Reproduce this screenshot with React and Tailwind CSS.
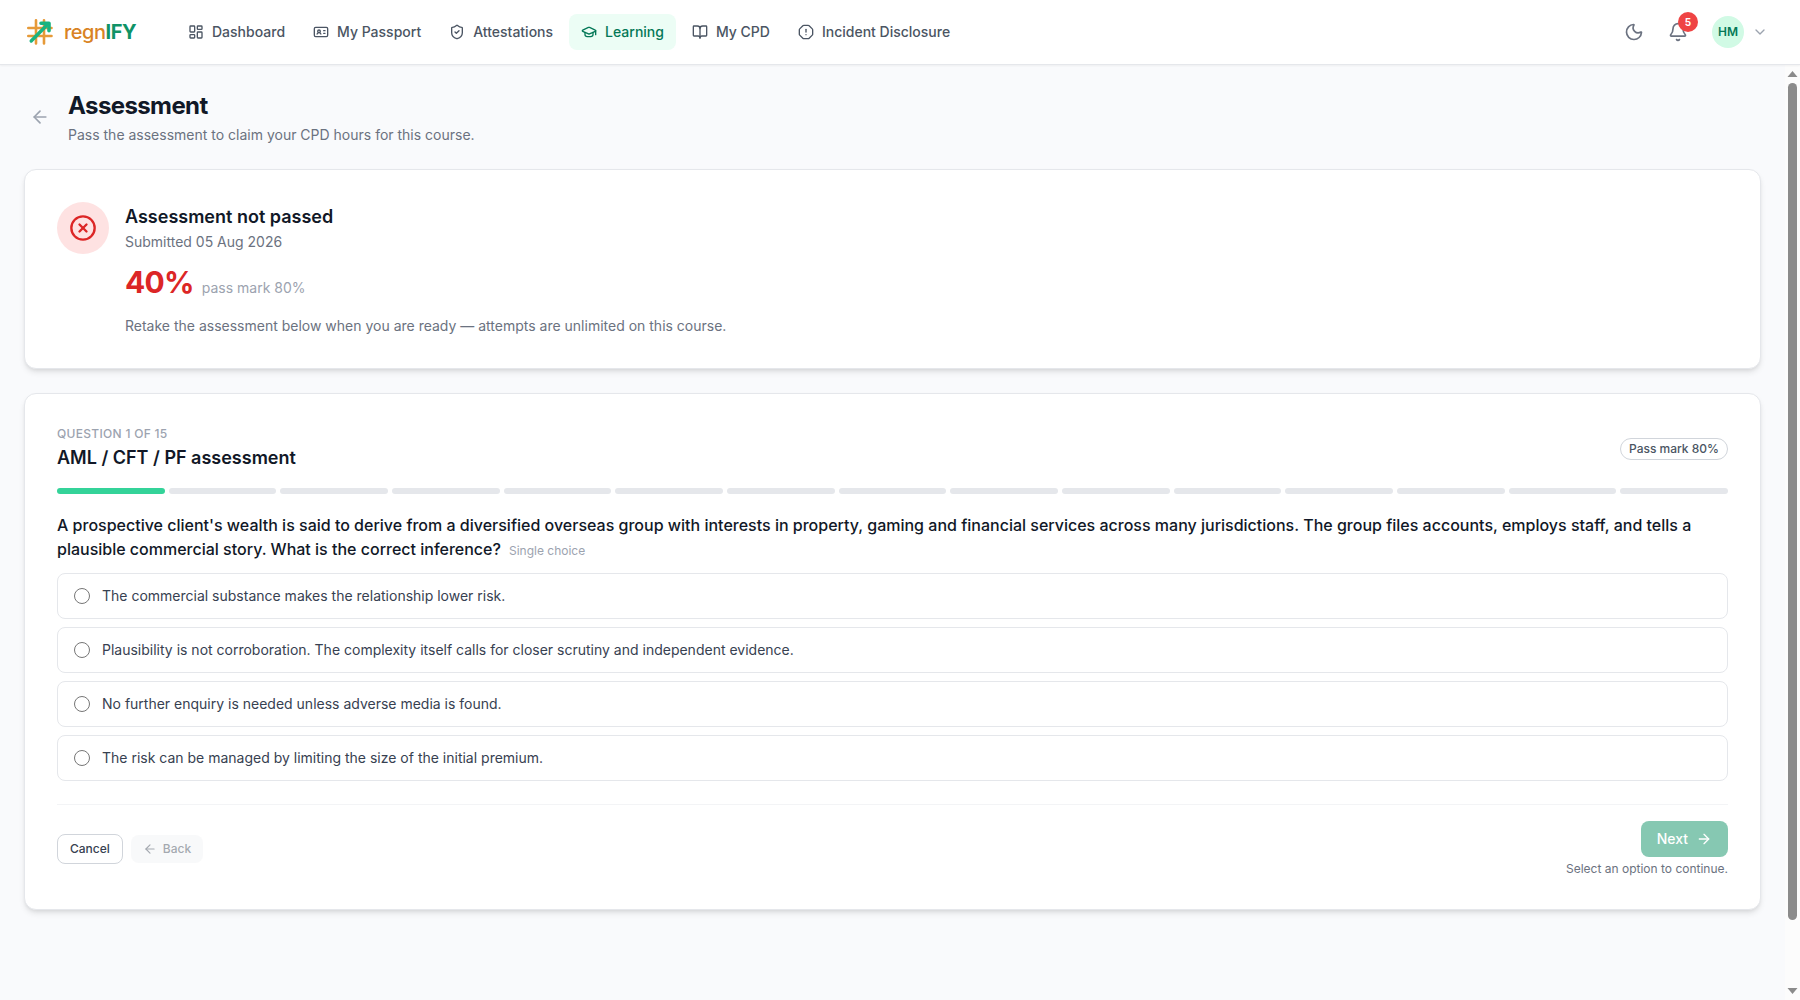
import React, { useState } from 'react';
import {
  ArrowLeft,
  ArrowRight,
  Bell,
  BookOpen,
  ChevronDown,
  CircleX,
  GraduationCap,
  IdCard,
  LayoutDashboard,
  Moon,
  OctagonAlert,
  ShieldCheck,
} from 'lucide-react';

const navItems = [
  { label: 'Dashboard', icon: LayoutDashboard },
  { label: 'My Passport', icon: IdCard },
  { label: 'Attestations', icon: ShieldCheck },
  { label: 'Learning', icon: GraduationCap, active: true },
  { label: 'My CPD', icon: BookOpen },
  { label: 'Incident Disclosure', icon: OctagonAlert },
];

const TOTAL_QUESTIONS = 15;

const question = {
  text: "A prospective client's wealth is said to derive from a diversified overseas group with interests in property, gaming and financial services across many jurisdictions. The group files accounts, employs staff, and tells a plausible commercial story. What is the correct inference?",
  options: [
    'The commercial substance makes the relationship lower risk.',
    'Plausibility is not corroboration. The complexity itself calls for closer scrutiny and independent evidence.',
    'No further enquiry is needed unless adverse media is found.',
    'The risk can be managed by limiting the size of the initial premium.',
  ],
};

function Logo() {
  return (
    <a href="#" className="flex items-center gap-2">
      <svg className="w-8 h-8" viewBox="0 0 32 32" fill="none" strokeLinecap="round" strokeLinejoin="round">
        <path d="M12 4.3v23.2M20 4.3v23.2M4.3 12h23.2M4.3 20h23.2" stroke="#e69a38" strokeWidth="2.6" />
        <path d="M7.2 25L23 9" stroke="#1ab380" strokeWidth="3.4" />
        <path d="M17 7.2h8v7.6" stroke="#1ab380" strokeWidth="3.6" />
      </svg>
      <span className="text-xl font-medium tracking-tight text-[#d98324]">
        regn<span className="font-bold text-[#0f9367]">IFY</span>
      </span>
    </a>
  );
}

function Header() {
  return (
    <header className="relative z-10 shrink-0 flex items-center justify-between h-[65px] px-6 bg-white border-b border-[#e5e7eb] shadow-xs">
      <div className="flex items-center gap-10">
        <Logo />
        <nav className="flex items-center gap-1">
          {navItems.map(({ label, icon: Icon, active }) => (
            <a
              key={label}
              href="#"
              className={
                active
                  ? 'flex items-center gap-2 px-3 py-2 rounded-lg text-sm font-medium bg-[#ecfdf5] text-[#047857]'
                  : 'flex items-center gap-2 px-3 py-2 rounded-lg text-sm font-medium text-[#4b5563]'
              }
            >
              <Icon className="w-4 h-4" />
              {label}
            </a>
          ))}
        </nav>
      </div>

      <div className="flex items-center gap-2">
        <button aria-label="Toggle dark mode" className="p-2 rounded-lg text-[#6b7280]">
          <Moon className="w-5 h-5" />
        </button>
        <button aria-label="Notifications" className="relative p-2 rounded-lg text-[#6b7280]">
          <Bell className="w-5 h-5" />
          <span className="absolute -top-0.5 -right-0.5 flex items-center justify-center w-5 h-5 rounded-full bg-[#ef4444] text-[10px] font-bold text-white">
            5
          </span>
        </button>
        <button aria-label="Account menu" className="flex items-center gap-2 px-2 rounded-lg">
          <span className="flex items-center justify-center w-8 h-8 rounded-full bg-[#d1fae5] text-xs font-semibold text-[#047857]">
            HM
          </span>
          <ChevronDown className="w-4 h-4 text-[#9ca3af]" />
        </button>
      </div>
    </header>
  );
}

function ResultCard() {
  return (
    <section className="flex items-start gap-4 p-8 bg-white rounded-xl border border-[#e5e7eb] shadow-md">
      <div className="flex items-center justify-center w-[52px] h-[52px] rounded-full bg-[#fee2e2]">
        <CircleX className="w-7 h-7 text-[#dc2626]" />
      </div>
      <div>
        <h2 className="text-lg leading-[30px] font-semibold text-[#111827]">Assessment not passed</h2>
        <p className="text-sm text-[#6b7280]">Submitted 05 Aug 2026</p>
        <div className="mt-3 flex items-baseline gap-2">
          <span className="text-3xl font-bold tracking-tight text-[#dc2626]">40%</span>
          <span className="text-sm text-[#9ca3af]">pass mark 80%</span>
        </div>
        <p className="mt-4 text-sm text-[#6b7280]">
          Retake the assessment below when you are ready — attempts are unlimited on this course.
        </p>
      </div>
    </section>
  );
}

function QuestionCard() {
  const [current] = useState(0);
  const [selected, setSelected] = useState(null);

  return (
    <section className="p-8 bg-white rounded-xl border border-[#e5e7eb] shadow-md">
      <div className="flex items-center justify-between">
        <div>
          <p className="text-xs font-medium uppercase tracking-wide text-[#9ca3af]">
            Question {current + 1} of {TOTAL_QUESTIONS}
          </p>
          <h2 className="mt-0.5 text-lg leading-7 font-semibold text-[#111827]">AML / CFT / PF assessment</h2>
        </div>
        <span className="px-2 py-0.5 rounded-full border border-[#d1d5db] text-xs font-medium text-[#4b5563]">
          Pass mark 80%
        </span>
      </div>

      {/* Progress */}
      <div className="mt-4 flex gap-1">
        {Array.from({ length: TOTAL_QUESTIONS }, (_, i) => (
          <div
            key={i}
            className={i <= current ? 'flex-1 h-1.5 rounded-full bg-[#34d399]' : 'flex-1 h-1.5 rounded-full bg-[#e5e7eb]'}
          />
        ))}
      </div>

      <fieldset className="mt-[19px]">
        <legend className="text-base font-medium text-[#111827]">
          {question.text}
          <span className="ml-2 text-xs font-normal text-[#9ca3af]">Single choice</span>
        </legend>
        <div className="mt-3 flex flex-col gap-2">
          {question.options.map((option, i) => (
            <label
              key={option}
              className="flex items-center gap-3 px-4 py-3 rounded-lg border border-[#e5e7eb] text-sm text-[#374151] cursor-pointer"
            >
              <input
                type="radio"
                name="answer"
                className="w-4 h-4"
                checked={selected === i}
                onChange={() => setSelected(i)}
              />
              {option}
            </label>
          ))}
        </div>
      </fieldset>

      <div className="mt-[23px] pt-4 flex items-center justify-between border-t border-[#f3f4f6]">
        <div className="flex items-center gap-2">
          <button className="px-3 py-1.5 rounded-lg border border-[#d1d5db] bg-white text-xs font-medium text-[#374151]">
            Cancel
          </button>
          <button
            disabled
            className="flex items-center gap-1.5 px-3 py-1.5 rounded-lg bg-[#f3f4f6] text-xs font-medium text-[#4b5563] disabled:opacity-50"
          >
            <ArrowLeft className="w-3.5 h-3.5" />
            Back
          </button>
        </div>
        <div className="flex flex-col items-end gap-1">
          <button
            disabled={selected === null}
            className="flex items-center gap-2 px-4 py-2 rounded-lg bg-[#0f9367] text-sm font-medium text-white disabled:opacity-50"
          >
            Next
            <ArrowRight className="w-4 h-4" />
          </button>
          <p className="text-xs text-[#6b7280]">Select an option to continue.</p>
        </div>
      </div>
    </section>
  );
}

function ScrollBar() {
  return (
    <div aria-hidden="true" className="shrink-0 w-[15px] flex flex-col items-center bg-[#fcfcfc]">
      <svg className="w-[15px] h-[18px] shrink-0" viewBox="0 0 15 18" fill="#8b8b8b">
        <path d="M2.5 12L7.5 6l5 6z" />
      </svg>
      <div className="flex-[27] w-[9px] rounded-full bg-[#8b8b8b]" />
      <div className="flex-[2]" />
      <svg className="w-[15px] h-[18px] shrink-0" viewBox="0 0 15 18" fill="#8b8b8b">
        <path d="M2.5 6l5 6 5-6z" />
      </svg>
    </div>
  );
}

export default function App() {
  return (
    <div className="flex flex-col h-screen bg-[#f9fafc] font-['Inter',sans-serif]">
      <Header />
      <div className="flex-1 min-h-0 flex">
        <main className="flex-1 min-w-0 overflow-y-auto [scrollbar-width:none]">
          <div className="p-6 pb-24 flex flex-col gap-6">
            <div className="flex items-center gap-3">
              <button aria-label="Go back" className="p-1.5 rounded-lg text-[#9ca3af]">
                <ArrowLeft className="w-5 h-5" />
              </button>
              <div>
                <h1 className="text-2xl leading-[34px] font-bold tracking-tight text-[#111827]">Assessment</h1>
                <p className="mt-0.5 text-sm text-[#6b7280]">
                  Pass the assessment to claim your CPD hours for this course.
                </p>
              </div>
            </div>
            <ResultCard />
            <QuestionCard />
          </div>
        </main>
        <ScrollBar />
      </div>
    </div>
  );
}
